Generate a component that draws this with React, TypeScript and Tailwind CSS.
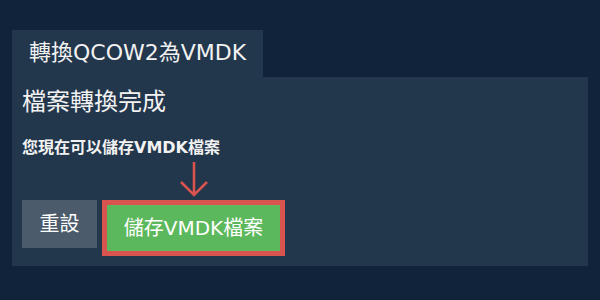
import React from "react";

const font = { fontFamily: '"DejaVu Sans", "Noto Sans CJK TC", sans-serif' };

function DownArrow() {
    return (
        <svg width="30" height="38" viewBox="0 0 30 38" className="absolute bottom-full left-1/2 -translate-x-1/2 mb-[2px]">
            <path d="M15 2 V35 M2 22 L15 35 L28 22" fill="none" stroke="#d9534f" strokeWidth="2.6" />
        </svg>
    );
}

export default function App() {
    return (
        <div className="w-[600px] h-[300px] bg-[#10233a] pt-[30px] px-[12px] text-[#f2f2f2]" style={font}>
            <div className="inline-flex h-[47px] items-center bg-[#22364c] px-[17px] pb-[3px] text-[22px]">
                轉換QCOW2為VMDK
            </div>

            <div className="bg-[#22364c] px-[10px] pt-[7px] pb-[10px]">
                <h2 className="text-[24px] leading-[36px] font-normal">檔案轉換完成</h2>
                <p className="mt-[17px] text-[16px] leading-[22px] font-bold">您現在可以儲存VMDK檔案</p>

                <div className="flex items-start gap-[5px] mt-[41px]">
                    <button className="h-[48px] w-[75px] bg-[#4b5b6b] text-[20px] text-white">重設</button>
                    <div className="relative">
                        <DownArrow />
                        <button className="h-[56px] w-[183px] bg-[#5cb85c] border-[5px] border-[#d9534f] text-[20px] text-white">
                            儲存VMDK檔案
                        </button>
                    </div>
                </div>
            </div>
        </div>
    );
}
